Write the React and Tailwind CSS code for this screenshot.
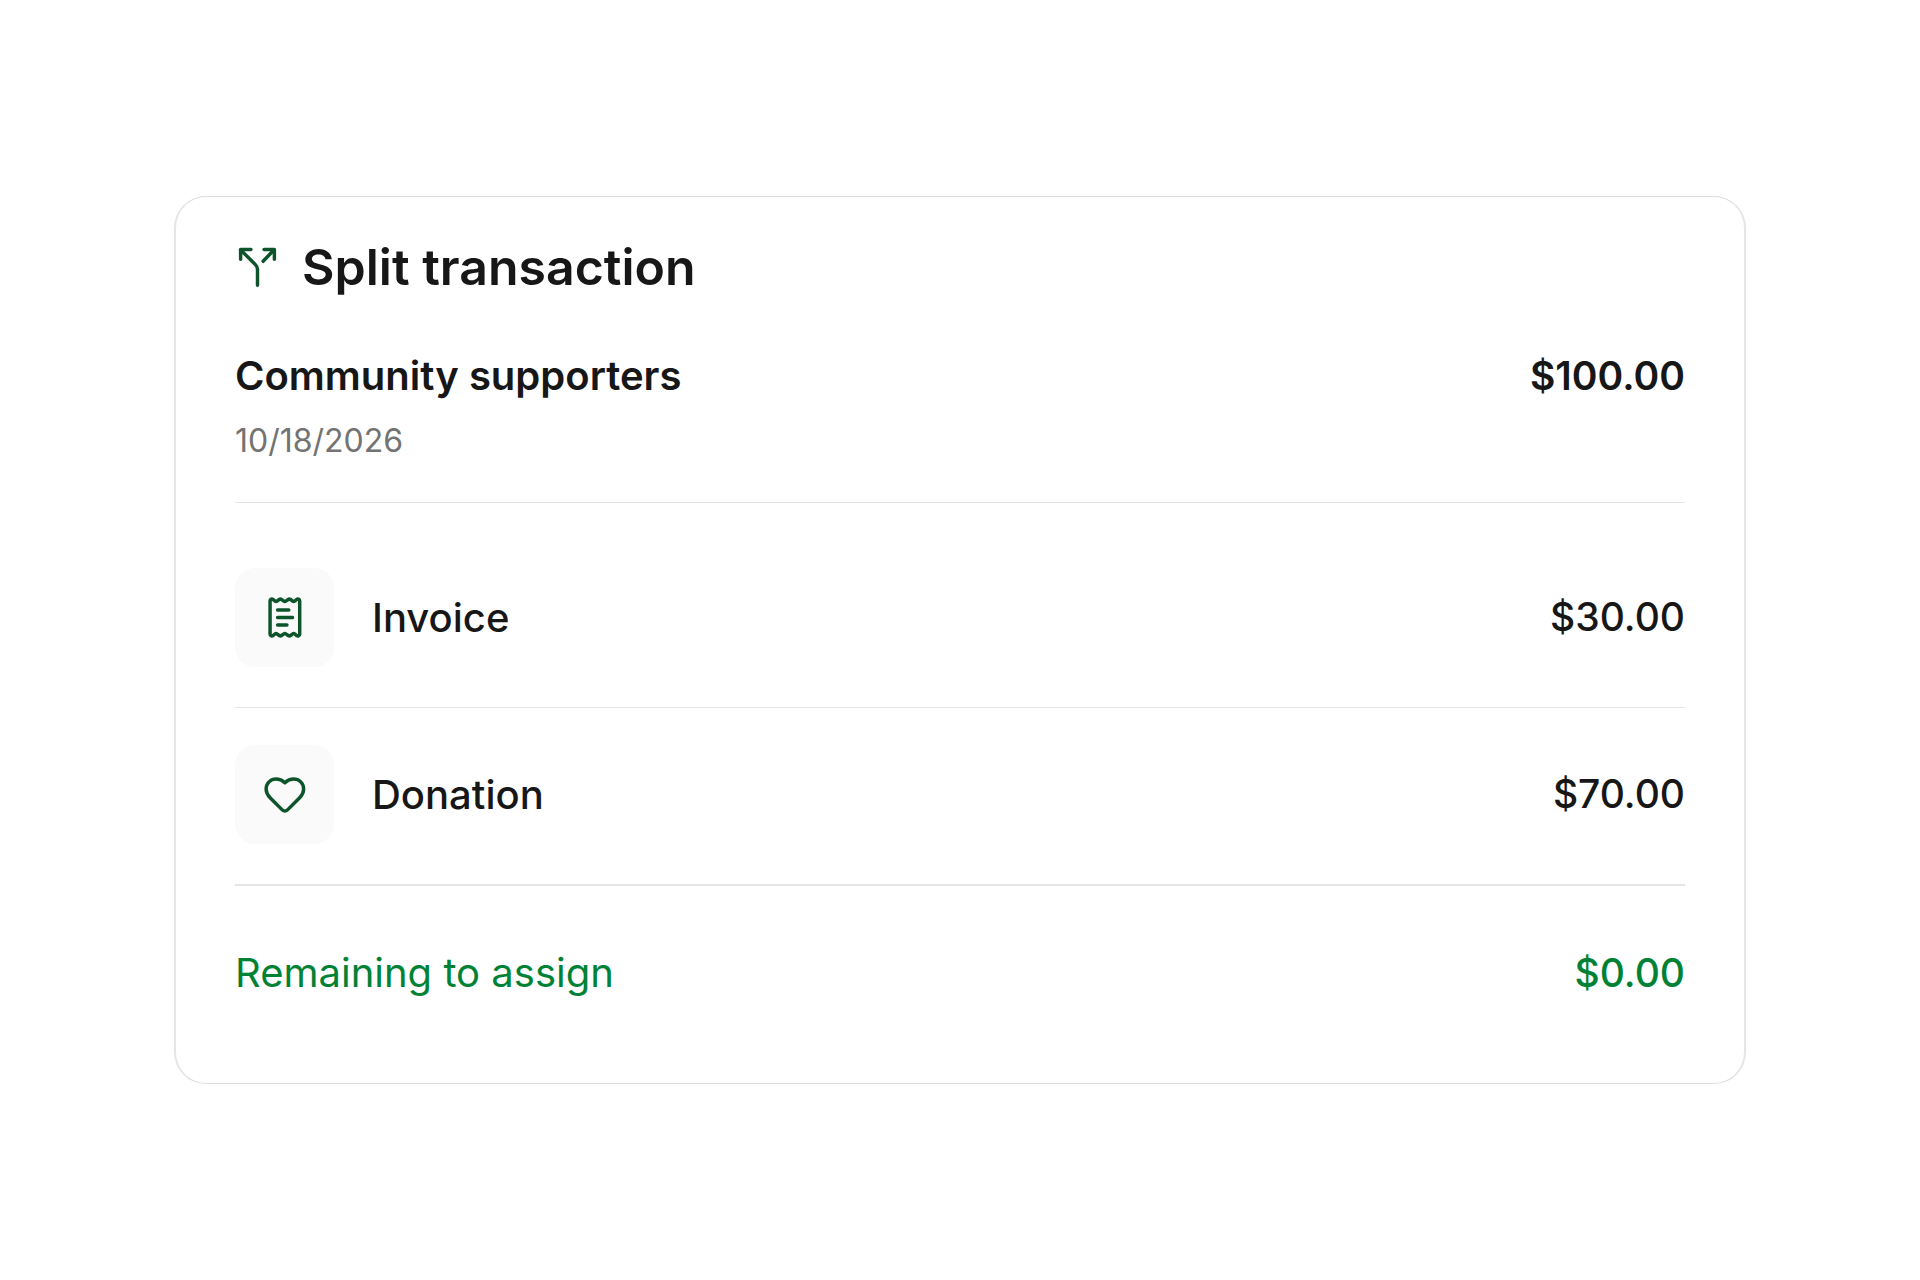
import React from "react";

const splits = [
  { label: "Invoice", amount: "$30.00", icon: ReceiptIcon },
  { label: "Donation", amount: "$70.00", icon: HeartIcon },
];

function IconBase({ className, children }) {
  return (
    <svg
      viewBox="0 0 24 24"
      fill="none"
      stroke="currentColor"
      strokeWidth="1.85"
      strokeLinecap="round"
      strokeLinejoin="round"
      aria-hidden="true"
      className={className}
    >
      {children}
    </svg>
  );
}

function SplitIcon({ className }) {
  return (
    <IconBase className={className}>
      <path d="M12 21.500V13C12 12 11.700 11.300 11 10.600L3 2.600" />
      <path d="M3 7.600V2.400h5.500" />
      <path d="M15 8.700 20.700 2.700" />
      <path d="M15.500 2.400H21v5.200" />
    </IconBase>
  );
}

function ReceiptIcon({ className }) {
  return (
    <IconBase className={className}>
      <path d="M4.300 3.100c0-.9 1-1.200 1.700-.6l1 .8q.5.4 1 0l1.200-.9q.6-.4 1.200 0l1.300.9q.5.4 1 0l1.300-.9q.6-.4 1.200 0l1.200.9q.5.4 1 0l1-.8c.7-.6 1.700-.3 1.700.6v17.800c0 .9-1 1.200-1.700.6l-1-.8q-.5-.4-1 0l-1.200.9q-.6.4-1.200 0l-1.300-.9q-.5-.4-1 0l-1.300.9q-.6.4-1.200 0l-1.200-.9q-.5-.4-1 0l-1 .8c-.7.6-1.700.3-1.700-.6z" />
      <path d="M8.300 8h6M8.300 12h8M8.300 16h5" />
    </IconBase>
  );
}

function HeartIcon({ className }) {
  return (
    <IconBase className={className}>
      <path d="M12.200 5.700C10.700 4.300 9.200 3.700 7.500 3.700 4.500 3.700 2.200 6.100 2.200 9.100c0 1.700.7 3.200 2.100 4.600l6.500 6.500c.8.800 2 .800 2.800 0l6.500-6.500c1.400-1.400 2.100-2.900 2.100-4.600 0-3-2.300-5.400-5.300-5.400-1.700 0-3.200.6-4.700 2z" />
    </IconBase>
  );
}

export default function App() {
  return (
    <main className="flex min-h-screen items-center justify-center bg-white px-[174px] py-12 font-['Inter',sans-serif] text-neutral-900">
      <section className="w-full rounded-[32px] border-x-2 border-y border-x-neutral-200 border-y-[#dcdcdc] px-[59px] pt-[38px] pb-[78px]">
        <header className="flex items-center gap-[22px]">
          <SplitIcon className="size-[45px] text-green-900" />
          <h1 className="text-[50px] leading-[64px] font-semibold">
            Split transaction
          </h1>
        </header>

        <div className="mt-[45px] flex items-start justify-between border-b border-neutral-200 pb-7">
          <div>
            <h2 className="text-[40px] leading-[64px] font-semibold">
              Community supporters
            </h2>
            <p className="text-[32px] leading-[66px] text-neutral-500">
              10/18/2026
            </p>
          </div>
          <p className="text-[39px] leading-[64px] font-semibold">$100.00</p>
        </div>

        <ul className="mt-7 font-medium">
          {splits.map(({ label, amount, icon: Icon }) => (
            <li
              key={label}
              className="flex items-center justify-between border-b border-neutral-200 pt-[37px] pb-10 last:border-b-2"
            >
              <div className="flex items-center gap-[38px] text-[40px]">
                <span className="flex size-[99px] items-center justify-center rounded-[20px] bg-neutral-50 text-green-900">
                  <Icon className="size-[45px]" />
                </span>
                <span>{label}</span>
              </div>
              <span className="text-[39px]">{amount}</span>
            </li>
          ))}
        </ul>

        <div className="mt-[55px] flex items-center justify-between leading-[64px] text-green-700">
          <span className="text-[40px]">Remaining to assign</span>
          <span className="text-[39px] font-medium">$0.00</span>
        </div>
      </section>
    </main>
  );
}
